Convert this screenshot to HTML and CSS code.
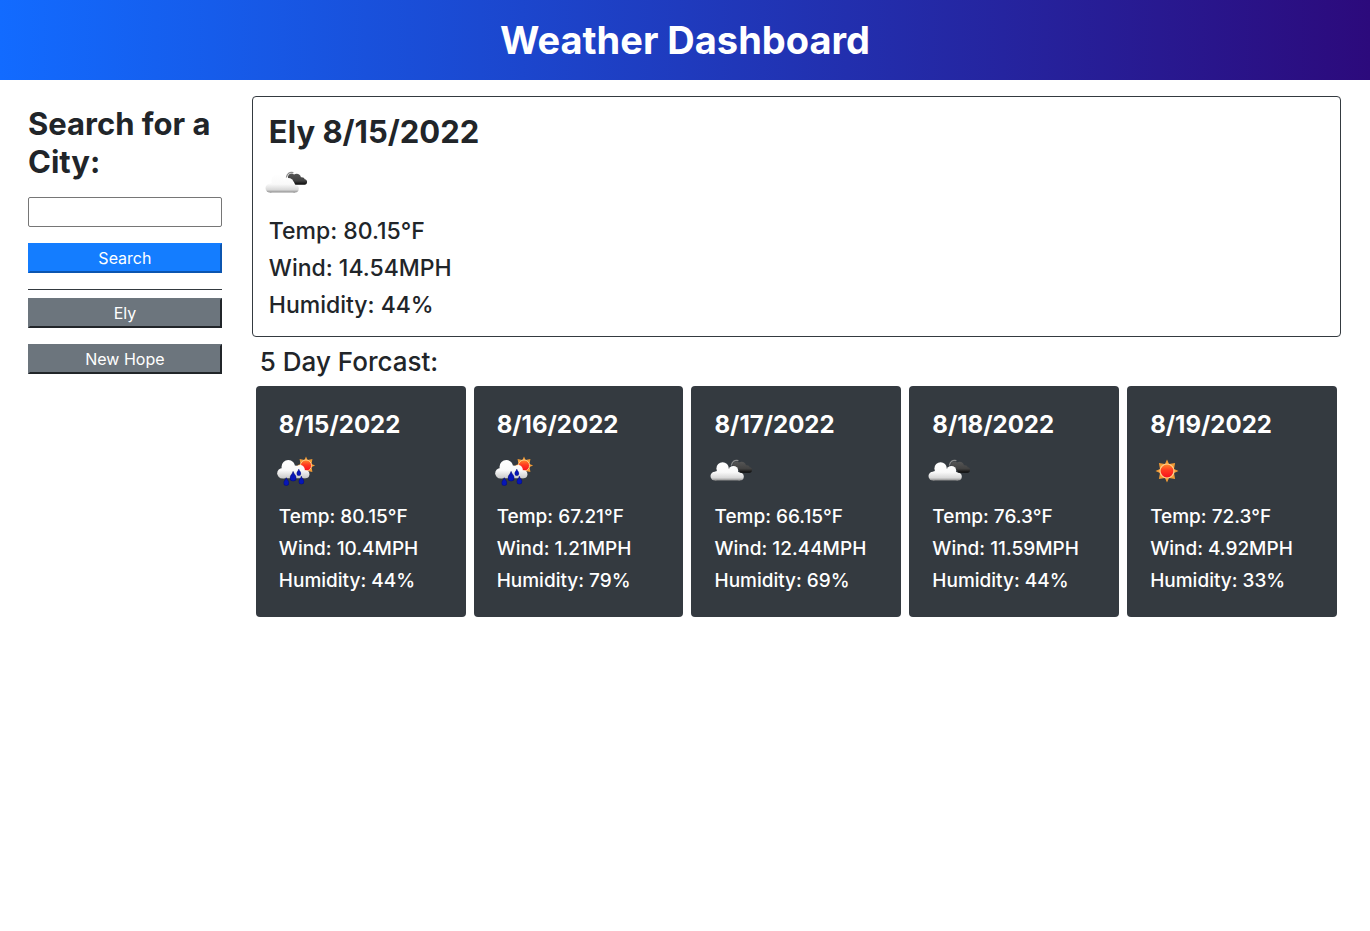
FILE: index.html
```html
<!DOCTYPE html>
<html lang="en">
<head>
<meta charset="utf-8">
<meta name="viewport" content="width=device-width, initial-scale=1">
<title>Weather Dashboard</title>
<link rel="stylesheet" href="styles.css">
</head>
<body>
<svg class="sprite" width="0" height="0" aria-hidden="true">
  <defs>
    <linearGradient id="white" gradientUnits="userSpaceOnUse" x1="0" y1="15" x2="0" y2="33.6">
      <stop offset="0" stop-color="#fff"/><stop offset=".55" stop-color="#f9f9f9"/><stop offset=".85" stop-color="#d8d8d8"/><stop offset="1" stop-color="#8b8b8b"/>
    </linearGradient>
    <linearGradient id="rainy" gradientUnits="userSpaceOnUse" x1="0" y1="13" x2="0" y2="32">
      <stop offset="0" stop-color="#fff"/><stop offset=".55" stop-color="#f9f9f9"/><stop offset="1" stop-color="#c4c4c4"/>
    </linearGradient>
    <linearGradient id="dark" x1="0" y1="0" x2="0" y2="1">
      <stop offset="0" stop-color="#565656"/><stop offset=".65" stop-color="#414141"/><stop offset="1" stop-color="#090909"/>
    </linearGradient>
    <linearGradient id="core" x1="0" y1="0" x2="0" y2="1">
      <stop offset="0" stop-color="#ff8a2a"/><stop offset=".45" stop-color="#ff3a20"/><stop offset="1" stop-color="#f80d1c"/>
    </linearGradient>
    <symbol id="sun" viewBox="0 0 24 24">
      <path fill="#f39b35" d="M12 .5 14 5 20.1 3.9 19 10 23.5 12 19 14 20.1 20.1 14 19 12 23.5 10 19 3.9 20.1 5 14 .5 12 5 10 3.9 3.9 10 5Z"/>
      <circle cx="12" cy="12" r="7" fill="url(#core)" stroke="#ffd08a" stroke-width="1.2"/>
    </symbol>
    <symbol id="drop" viewBox="0 0 6 9">
      <path fill="#0716b8" stroke="#030a6e" stroke-width=".5" d="M3 .4C3.5 2.6 5.7 3.8 5.7 6A2.7 2.7 0 0 1 .3 6C.3 3.8 2.5 2.6 3 .4Z"/>
    </symbol>
    <symbol id="clouds" viewBox="0 0 50 50">
      <path fill="none" stroke="#8c8c8c" stroke-width="1.3" d="M25.4 18.5C26 14.5 28.5 12.6 32.4 13.6"/>
      <path fill="url(#dark)" d="M27 17.5C27.5 14.6 31 13.8 33 15.4 36 13.7 39.5 15.2 39.9 18.3 42 17.9 43.4 19 43.7 20.2 47 20.5 46.9 25.7 43.6 25.7H34C33.4 22 30 19.5 27 20Z"/>
      <g fill="url(#white)">
        <circle cx="16.6" cy="21.4" r="6.2"/>
        <circle cx="27.4" cy="23.7" r="4.8"/>
        <circle cx="8.9" cy="29.1" r="4.4"/>
        <circle cx="33.9" cy="29.6" r="3.9"/>
        <path d="M8.9 24.7 16 22H27L33.9 25.7V33.5H8.9Z"/>
      </g>
    </symbol>
    <symbol id="rain" viewBox="0 0 50 50">
      <use href="#sun" x="25.5" y="9" width="19" height="19"/>
      <g fill="url(#rainy)">
        <circle cx="17.3" cy="19.9" r="6.8"/>
        <circle cx="11.5" cy="26.2" r="5.3"/>
        <circle cx="29.3" cy="22.6" r="4.5"/>
        <circle cx="34.4" cy="27.2" r="4"/>
        <path d="M11.5 21 18 18 29 19 34.4 25V31.2H12Z"/>
      </g>
      <use href="#drop" x="18.6" y="24" width="7" height="10.5"/>
      <use href="#drop" x="25.4" y="21.8" width="4.8" height="7.2"/>
      <use href="#drop" x="12.4" y="30.2" width="5.8" height="8.7"/>
      <use href="#drop" x="27.5" y="28.8" width="5.8" height="8.7"/>
    </symbol>
    <symbol id="clear" viewBox="0 0 50 50">
      <use href="#sun" x="13" y="12" width="24" height="24"/>
    </symbol>
  </defs>
</svg>

<header class="banner"><h1>Weather Dashboard</h1></header>

<div class="layout">
  <aside class="sidebar">
    <form class="search">
      <h2><label for="city">Search for a City:</label></h2>
      <input class="field" id="city" type="text">
      <button class="btn btn-primary" type="button">Search</button>
    </form>
    <nav class="history" aria-label="Recent cities">
      <button class="btn btn-secondary" type="button">Ely</button>
      <button class="btn btn-secondary" type="button">New Hope</button>
    </nav>
  </aside>

  <main class="content">
    <section class="current">
      <h2>Ely 8/15/2022</h2>
      <svg class="icon" role="img" aria-label="Broken clouds"><use href="#clouds"/></svg>
      <p>Temp: 80.15°F</p>
      <p>Wind: 14.54MPH</p>
      <p>Humidity: 44%</p>
    </section>
    <h3 class="forecast-title">5 Day Forcast:</h3>
    <section class="forecast">
      <article class="day">
        <h4>8/15/2022</h4>
        <svg class="icon" role="img" aria-label="Rain"><use href="#rain"/></svg>
        <p>Temp: 80.15°F</p><p>Wind: 10.4MPH</p><p>Humidity: 44%</p>
      </article>
      <article class="day">
        <h4>8/16/2022</h4>
        <svg class="icon" role="img" aria-label="Rain"><use href="#rain"/></svg>
        <p>Temp: 67.21°F</p><p>Wind: 1.21MPH</p><p>Humidity: 79%</p>
      </article>
      <article class="day">
        <h4>8/17/2022</h4>
        <svg class="icon" role="img" aria-label="Broken clouds"><use href="#clouds"/></svg>
        <p>Temp: 66.15°F</p><p>Wind: 12.44MPH</p><p>Humidity: 69%</p>
      </article>
      <article class="day">
        <h4>8/18/2022</h4>
        <svg class="icon" role="img" aria-label="Broken clouds"><use href="#clouds"/></svg>
        <p>Temp: 76.3°F</p><p>Wind: 11.59MPH</p><p>Humidity: 44%</p>
      </article>
      <article class="day">
        <h4>8/19/2022</h4>
        <svg class="icon" role="img" aria-label="Clear sky"><use href="#clear"/></svg>
        <p>Temp: 72.3°F</p><p>Wind: 4.92MPH</p><p>Humidity: 33%</p>
      </article>
    </section>
  </main>
</div>
</body>
</html>
```

FILE: styles.css
```css
*, *::before, *::after { box-sizing: border-box; }

body {
  margin: 0;
  background: #fff;
  color: #212529;
  font-family: Inter, "Liberation Sans", sans-serif;
  font-size: 16px;
  line-height: 24px;
}

h1, h2, h3, h4, p { margin: 0; }

.sprite { position: absolute; }

.banner {
  padding: 16px;
  background: linear-gradient(to right, #126bff, #2c0a7c);
  color: #fff;
  text-align: center;
}

.banner h1 {
  font-size: 38px;
  font-weight: 700;
  line-height: 48px;
}

.layout {
  display: grid;
  grid-template-columns: minmax(0, 2fr) minmax(0, 10fr);
  padding: 0 14px 0 13px;
}

.sidebar { padding: 25px 15px; }
.content { padding: 16px 15px; }

.search {
  display: flex;
  flex-direction: column;
  gap: 16px;
  padding-bottom: 16px;
  border-bottom: 1px solid #343a40;
}

.sidebar h2, .current h2 {
  font-size: 31px;
  font-weight: 700;
  line-height: 38px;
}

.field {
  width: 100%;
  height: 30px;
  padding: 1px 2px;
  border: 1px solid #767676;
  border-radius: 2px;
  background: #fff;
  font: inherit;
}

.history {
  display: flex;
  flex-direction: column;
  gap: 16px;
  padding-top: 8px;
}

.btn {
  width: 100%;
  height: 30px;
  padding: 1px 6px;
  border: 2px solid;
  color: #fff;
  font-family: inherit;
  font-size: 16px;
  line-height: 24px;
}

.btn-primary {
  border-color: #147dff #0b55b0 #0b55b0 #147dff;
  background: #147dff;
}

.btn-secondary {
  border-color: #6c757d #212529 #212529 #6c757d;
  background: #6c757d;
}

.current {
  padding: 16px;
  border: 1px solid #343a40;
  border-radius: 4px;
}

.icon {
  display: block;
  width: 50px;
  height: 50px;
  margin: 8px 0 8px -8px;
}

.current p {
  font-size: 23px;
  font-weight: 500;
  line-height: 29px;
}

.current p + p, .day p + p { margin-top: 8px; }

.forecast-title {
  margin: 8px;
  font-size: 26px;
  font-weight: 500;
  line-height: 33px;
}

.forecast {
  display: grid;
  grid-template-columns: repeat(5, minmax(0, 1fr));
  gap: 8px;
  padding: 0 4px;
}

.day {
  padding: 24px 23px;
  border-radius: 4px;
  background: #343a40;
  color: #fff;
}

.day h4 {
  font-size: 24px;
  font-weight: 700;
  line-height: 29px;
}

.day p {
  font-size: 19px;
  font-weight: 500;
  line-height: 24px;
}
```
